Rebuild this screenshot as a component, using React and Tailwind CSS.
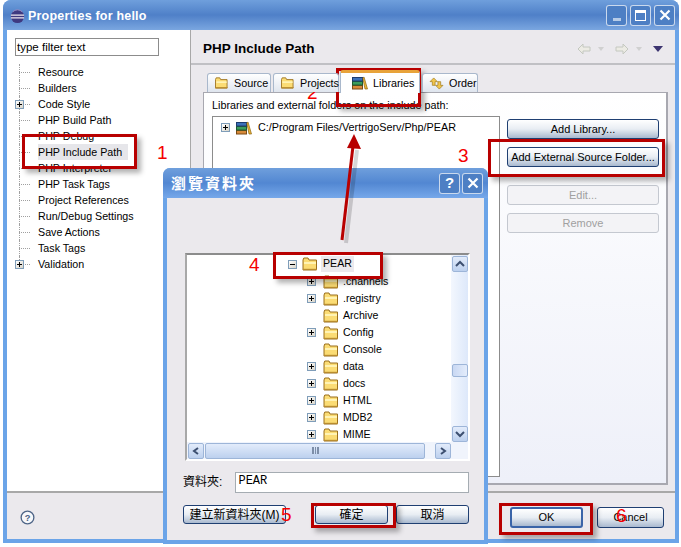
import React from 'react';

const treeItems = [
  { label: 'Resource' },
  { label: 'Builders' },
  { label: 'Code Style', plus: true },
  { label: 'PHP Build Path' },
  { label: 'PHP Debug' },
  { label: 'PHP Include Path', selected: true },
  { label: 'PHP Interpreter' },
  { label: 'PHP Task Tags' },
  { label: 'Project References' },
  { label: 'Run/Debug Settings' },
  { label: 'Save Actions' },
  { label: 'Task Tags' },
  { label: 'Validation', plus: true, last: true },
];

const folders = [
  { label: '.channels', plus: true },
  { label: '.registry', plus: true },
  { label: 'Archive' },
  { label: 'Config', plus: true },
  { label: 'Console' },
  { label: 'data', plus: true },
  { label: 'docs', plus: true },
  { label: 'HTML', plus: true },
  { label: 'MDB2', plus: true },
  { label: 'MIME', plus: true },
];

const cjk = "font-['Liberation_Sans','Noto_Sans_CJK_TC',sans-serif]";

const Toggle = ({ minus }) => (
  <span className="relative block w-[9px] h-[9px] shrink-0 border border-[#7f9db9] bg-gradient-to-br from-white to-[#d8d4c8]">
    <span className="absolute left-[1px] top-[3px] w-[5px] h-px bg-black" />
    {!minus && <span className="absolute left-[3px] top-[1px] w-px h-[5px] bg-black" />}
  </span>
);

const Folder = ({ className = 'w-[16px] h-[14px]' }) => (
  <svg viewBox="0 0 16 14" className={`${className} shrink-0`}>
    <path d="M1 3 L1.8 1 H6 L7 3 H14.5 V13 H1 Z" fill="#fbdc74" stroke="#9a6f1c" strokeWidth="1" />
    <path d="M2 5 H14 V7 H2 Z" fill="#fff3b4" />
    <path d="M1 13 H15 V11.8 H1 Z" fill="#b98c2e" />
  </svg>
);

const Books = () => (
  <svg viewBox="0 0 16 14" className="w-[16px] h-[14px] shrink-0">
    <rect x="0.5" y="9.5" width="10" height="3.5" fill="#d88a3a" stroke="#7a4a14" />
    <rect x="0.5" y="5.5" width="10" height="3.5" fill="#3a9c5c" stroke="#1c5a30" />
    <rect x="0.5" y="1.5" width="10" height="3.5" fill="#3a70b8" stroke="#1c3c70" />
    <path d="M12 1 L15.5 13 H13 L10.8 2 Z" fill="#eeb63a" stroke="#8a6410" strokeWidth="0.7" />
  </svg>
);

const XpButton = ({ children, className = '', disabled }) => (
  <div
    className={`flex items-center justify-center rounded-[3px] border text-[11px] ${
      disabled ? 'border-[#c4c8d0] text-[#a0a0a0] bg-[#f3f3f6]' : 'border-[#1f3f72] text-black bg-gradient-to-b from-white via-[#e8edf3] to-[#a9b9cf]'
    } ${className}`}
  >
    {children}
  </div>
);

const TitleBtn = ({ children }) => (
  <div className="flex items-center justify-center w-[21px] h-[21px] rounded-[3px] border border-white/70 text-white bg-[#4d7fc4]">
    {children}
  </div>
);

const Tab = ({ icon, label, className = '' }) => (
  <div className={`flex items-center gap-[5px] h-[19px] pl-[6px] border border-b-0 border-[#a9b8cc] rounded-t-[3px] bg-gradient-to-b from-white to-[#dfe5ee] ${className}`}>
    {icon}
    <span>{label}</span>
  </div>
);

const Annot = ({ className, num, numClass }) => (
  <>
    <div className={`absolute border-[3px] border-[#b80000] shadow-[4px_4px_5px_rgba(0,0,0,0.3)] ${className}`} />
    <span className={`absolute text-[#f40000] text-[19px] leading-none font-['Liberation_Sans',sans-serif] ${numClass}`}>{num}</span>
  </>
);

const Arrow = ({ dir }) => (
  <svg viewBox="0 0 14 14" className="w-[14px] h-[14px]">
    <path d={dir === 'l' ? 'M1 7 L6 2 V5 H13 V9 H6 V12 Z' : 'M13 7 L8 2 V5 H1 V9 H8 V12 Z'} fill="#ecebe4" stroke="#c4c8c0" />
  </svg>
);

const ScrollBtn = ({ d, className = '' }) => (
  <div className={`flex items-center justify-center w-[16px] h-[16px] rounded-[2px] border border-[#9db5d8] bg-gradient-to-b from-[#e3ecfb] to-[#bcd0ee] ${className}`}>
    <svg viewBox="0 0 10 8" className="w-[10px] h-[8px]">
      <path d={d} fill="none" stroke="#3c4f70" strokeWidth="2" />
    </svg>
  </div>
);

const Dialog = () => (
  <div className={`absolute left-[163px] top-[168px] w-[325px] h-[376px] rounded-t-[7px] flex flex-col bg-[#6ba4e8] text-[12px] ${cjk}`}>
    <div className="h-[30px] shrink-0 flex items-center justify-between pl-[8px] pr-[5px] rounded-t-[7px] bg-gradient-to-b from-[#6f9fdc] via-[#5287d2] to-[#76a8ea]">
      <span className="text-white font-bold text-[15px] tracking-[2px] pt-[2px]">瀏覽資料夾</span>
      <div className="flex gap-[2px]">
        <TitleBtn><span className="font-bold text-[15px]">?</span></TitleBtn>
        <TitleBtn>
          <svg viewBox="0 0 12 12" className="w-[12px] h-[12px]"><path d="M1.5 1.5 L10.5 10.5 M10.5 1.5 L1.5 10.5" stroke="#fff" strokeWidth="2.2" /></svg>
        </TitleBtn>
      </div>
    </div>
    <div className="flex-1 mx-[4px] mb-[4px] bg-[#ebe9ed] flex flex-col pl-[18px] pr-[15px]">
      <div className="mt-[55px] h-[208px] w-[285px] border-2 border-t-[#8c8c8c] border-l-[#a8a8a8] border-r-white border-b-white bg-white flex flex-col">
        <div className="flex flex-1 min-h-0">
          <div className="flex-1 relative text-[10.6px]">
            <div className="flex items-center h-[18px] pl-[101px]">
              <Toggle minus />
              <span className="w-[5px]" />
              <Folder />
              <span className="ml-[3px] px-[2px] bg-[#ebe9ed]">PEAR</span>
            </div>
            {folders.map((f) => (
              <div key={f.label} className="flex items-center h-[17px] pl-[120px]">
                <span className="w-[9px] shrink-0">{f.plus && <Toggle />}</span>
                <span className="w-[7px]" />
                <Folder />
                <span className="ml-[4px]">{f.label}</span>
              </div>
            ))}
          </div>
          <div className="w-[17px] bg-gradient-to-r from-[#f3f7fe] to-[#dde8fa] flex flex-col items-center pt-[1px]">
            <ScrollBtn d="M1 6 L5 2 L9 6" />
            <div className="mt-[92px] w-[16px] h-[13px] rounded-[2px] border border-[#9db5d8] bg-gradient-to-r from-[#c9d8f3] to-[#e3ecfb]" />
            <div className="flex-1" />
            <ScrollBtn d="M1 2 L5 6 L9 2" />
          </div>
        </div>
        <div className="h-[17px] flex items-center bg-[#f0f4fc] pl-px pr-[17px]">
          <ScrollBtn d="M7 1 L3 4 L7 7" />
          <div className="flex-1 mx-px h-[16px] rounded-[2px] border border-[#9db5d8] bg-gradient-to-b from-[#e3ecfb] to-[#bcd0ee] flex items-center justify-center mr-[10px]">
            <span className="w-[7px] h-[7px] border-x border-[#7d8ea8] bg-[linear-gradient(90deg,#7d8ea8_1px,transparent_1px)] bg-[length:2px_2px]" />
          </div>
          <ScrollBtn d="M3 1 L7 4 L3 7" />
        </div>
      </div>
      <div className="mt-[11px] flex items-center h-[20px]">
        <span className="w-[50px] -ml-[2px]">資料夾:</span>
        <div className="ml-[3px] w-[236px] h-[21px] border border-[#a5acb2] bg-white pl-[2px] font-['Liberation_Mono',monospace] leading-[17px]">PEAR</div>
      </div>
      <div className="mt-[13px] flex items-center -ml-[2px]">
        <XpButton className="w-[103px] h-[19px] text-[12px]">建立新資料夾(M)</XpButton>
        <XpButton className="ml-[29px] w-[73px] h-[19px] text-[12px]">確定</XpButton>
        <XpButton className="ml-[8px] w-[73px] h-[19px] text-[12px]">取消</XpButton>
      </div>
    </div>
  </div>
);

export default function App() {
  return (
    <div className="relative w-[681px] h-[547px] overflow-hidden bg-white text-[10.8px] text-black font-['Liberation_Sans',sans-serif]">
      <div className="ml-[3px] w-[676px] h-[543px] rounded-t-[8px] bg-[#6ba4e8] flex flex-col">
        {/* title bar */}
        <div className="h-[30px] shrink-0 flex items-center justify-between pl-[7px] pr-[4px] rounded-t-[8px] bg-gradient-to-b from-[#6f9fdc] via-[#4f80c8] to-[#7aa6e0]">
          <div className="flex items-center gap-[3px] pt-[3px]">
            <svg viewBox="0 0 16 16" className="w-[15px] h-[15px]">
              <circle cx="8" cy="8" r="7" fill="#3f3a80" />
              <path d="M1 6.5 H15 M1 9.5 H15" stroke="#f0e8f0" strokeWidth="1.2" />
              <path d="M3 3 A7 7 0 0 1 13 3" stroke="#9a8ac0" fill="none" />
            </svg>
            <span className="text-white font-bold text-[12.5px] tracking-[0.2px]">Properties for hello</span>
          </div>
          <div className="flex gap-[3px]">
            <TitleBtn><span className="mt-[8px] w-[8px] h-[3px] bg-white/60" /></TitleBtn>
            <TitleBtn><span className="w-[11px] h-[11px] border border-t-[3px] border-white" /></TitleBtn>
            <TitleBtn>
              <svg viewBox="0 0 12 12" className="w-[12px] h-[12px]"><path d="M1.5 1.5 L10.5 10.5 M10.5 1.5 L1.5 10.5" stroke="#fff" strokeWidth="2.2" /></svg>
            </TitleBtn>
          </div>
        </div>

        {/* client */}
        <div className="flex-1 mx-[4px] mb-[4px] bg-[#ebe9ed] flex flex-col min-h-0">
          <div className="h-[463px] flex border-b-2 border-[#a8a8a8]">
            {/* left tree */}
            <div className="w-[184px] shrink-0 bg-white border-r border-[#a8a8a8] pl-[8px] pt-[8px]">
              <div className="w-[144px] h-[18px] border border-[#8c8c8c] pl-[1px] leading-[16px] text-[11.5px]">type filter text</div>
              <div className="mt-[8px] text-[10.7px]">
                {treeItems.map((t) => (
                  <div key={t.label} className="flex items-center h-[16px]">
                    <span className="relative w-[23px] h-full shrink-0">
                      <span className={`absolute left-[4px] top-0 border-l border-dotted border-[#a0a0a0] ${t.last ? 'h-[8px]' : 'h-full'}`} />
                      <span className="absolute left-[4px] top-[8px] w-[11px] border-t border-dotted border-[#a0a0a0]" />
                      {t.plus && <span className="absolute left-0 top-[4px]"><Toggle /></span>}
                    </span>
                    <span className={t.selected ? 'bg-[#e6e6ea] pr-[6px] leading-[16px]' : 'leading-[16px]'}>{t.label}</span>
                  </div>
                ))}
              </div>
            </div>

            {/* right page */}
            <div className="flex-1 flex flex-col min-w-0">
              <div className="h-[35px] shrink-0 border-b-2 border-[#c0c0c4] flex items-center justify-between pl-[12px] pr-[12px] pt-[5px]">
                <span className="font-bold text-[13.5px]">PHP Include Path</span>
                <div className="flex items-center">
                  <Arrow dir="l" />
                  <span className="ml-[7px] w-0 h-0 border-x-[3px] border-t-[4px] border-x-transparent border-t-[#d0d0d0]" />
                  <span className="ml-[11px]"><Arrow dir="r" /></span>
                  <span className="ml-[7px] w-0 h-0 border-x-[3px] border-t-[4px] border-x-transparent border-t-[#d0d0d0]" />
                  <span className="ml-[11px] w-0 h-0 border-x-[5px] border-t-[6px] border-x-transparent border-t-[#3c3470]" />
                </div>
              </div>

              <div className="pl-[12px] pr-[7px] pt-[8px] flex-1 flex flex-col min-h-0 pb-[6px]">
                <div className="flex items-end h-[19px] relative z-10 pl-[4px]">
                  <Tab className="w-[64px]" icon={<Folder className="w-[15px] h-[12px]" />} label="Source" />
                  <Tab className="ml-[2px] w-[66px]" icon={<Folder className="w-[15px] h-[12px]" />} label="Projects" />
                  <div className="ml-[1px] w-[80px] h-[23px] flex items-center gap-[5px] pl-[11px] bg-white border-x border-[#a9b8cc] border-t-[3px] border-t-[#e8a33a] rounded-t-[3px] -mb-px">
                    <Books />
                    <span>Libraries</span>
                  </div>
                  <Tab
                    className="ml-[2px] w-[56px]"
                    icon={
                      <svg viewBox="0 0 16 14" className="w-[15px] h-[13px] shrink-0">
                        <path d="M5 1 L9 5 H6.5 V9 H3.5 V5 H1 Z M11 13 L7 9 H9.5 V5 H12.5 V9 H15 Z" fill="#f1c54a" stroke="#9a7618" strokeWidth="0.7" />
                      </svg>
                    }
                    label="Order"
                  />
                </div>
                <div className="flex-1 border border-[#a8a8b0] border-r-2 border-b-2 flex flex-col bg-gradient-to-b from-white to-[#eef0f9] pl-[8px] pr-[7px] pt-[4px]">
                  <div className="leading-[16px]">Libraries and external folders on the include path:</div>
                  <div className="mt-[3px] flex gap-[7px] min-h-0">
                    <div className="w-[288px] h-[361px] border border-[#8c8c8c] bg-white pl-[8px] pt-[2px]">
                      <div className="flex items-center h-[17px]">
                        <Toggle />
                        <span className="w-[6px]" />
                        <Books />
                        <span className="ml-[6px]">C:/Program Files/VertrigoServ/Php/PEAR</span>
                      </div>
                    </div>
                    <div className="flex-1 flex flex-col pt-[3px]">
                      <XpButton className="h-[20px]">Add Library...</XpButton>
                      <XpButton className="mt-[8px] h-[20px]">Add External Source Folder...</XpButton>
                      <XpButton disabled className="mt-[18px] h-[20px]">Edit...</XpButton>
                      <XpButton disabled className="mt-[8px] h-[20px]">Remove</XpButton>
                    </div>
                  </div>
                </div>
              </div>
            </div>
          </div>

          {/* footer */}
          <div className="flex-1 flex items-center justify-between pl-[13px] pr-[11px] pt-[2px]">
            <svg viewBox="0 0 16 16" className="w-[15px] h-[15px]">
              <circle cx="8" cy="8" r="6.8" fill="#f6f7fa" stroke="#4d6486" strokeWidth="1.4" />
              <text x="8" y="12" fontSize="10" fontWeight="700" textAnchor="middle" fill="#4d6486" fontFamily="Liberation Sans">?</text>
            </svg>
            <div className="flex gap-[14px]">
              <XpButton className="w-[73px] h-[21px] border-2 border-[#3a64a8]">OK</XpButton>
              <XpButton className="w-[67px] h-[21px]">Cancel</XpButton>
            </div>
          </div>
        </div>
      </div>

      <Dialog />

      {/* red annotations */}
      <Annot className="left-[22px] top-[134px] w-[115px] h-[35px]" num="1" numClass="left-[157px] top-[143px]" />
      <Annot className="left-[336px] top-[68px] w-[85px] h-[39px]" num="2" numClass="left-[307px] top-[83px]" />
      <Annot className="left-[488px] top-[139px] w-[177px] h-[38px]" num="3" numClass="left-[458px] top-[146px]" />
      <Annot className="left-[273px] top-[252px] w-[110px] h-[27px]" num="4" numClass="left-[249px] top-[255px]" />
      <Annot className="left-[311px] top-[503px] w-[85px] h-[25px]" num="5" numClass="left-[281px] top-[505px]" />
      <Annot className="left-[499px] top-[503px] w-[94px] h-[32px]" num="6" numClass="left-[616px] top-[506px]" />
      <svg viewBox="0 0 681 547" className="absolute left-0 top-0 w-[681px] h-[547px] pointer-events-none">
        <path d="M346 243 L357 150" stroke="#000" strokeOpacity="0.16" strokeWidth="4" />
        <path d="M342 240 L353 146" stroke="#b80000" strokeWidth="3" fill="none" />
        <path d="M354 134 L347 148 L361 149 Z" fill="#b80000" />
      </svg>
    </div>
  );
}
